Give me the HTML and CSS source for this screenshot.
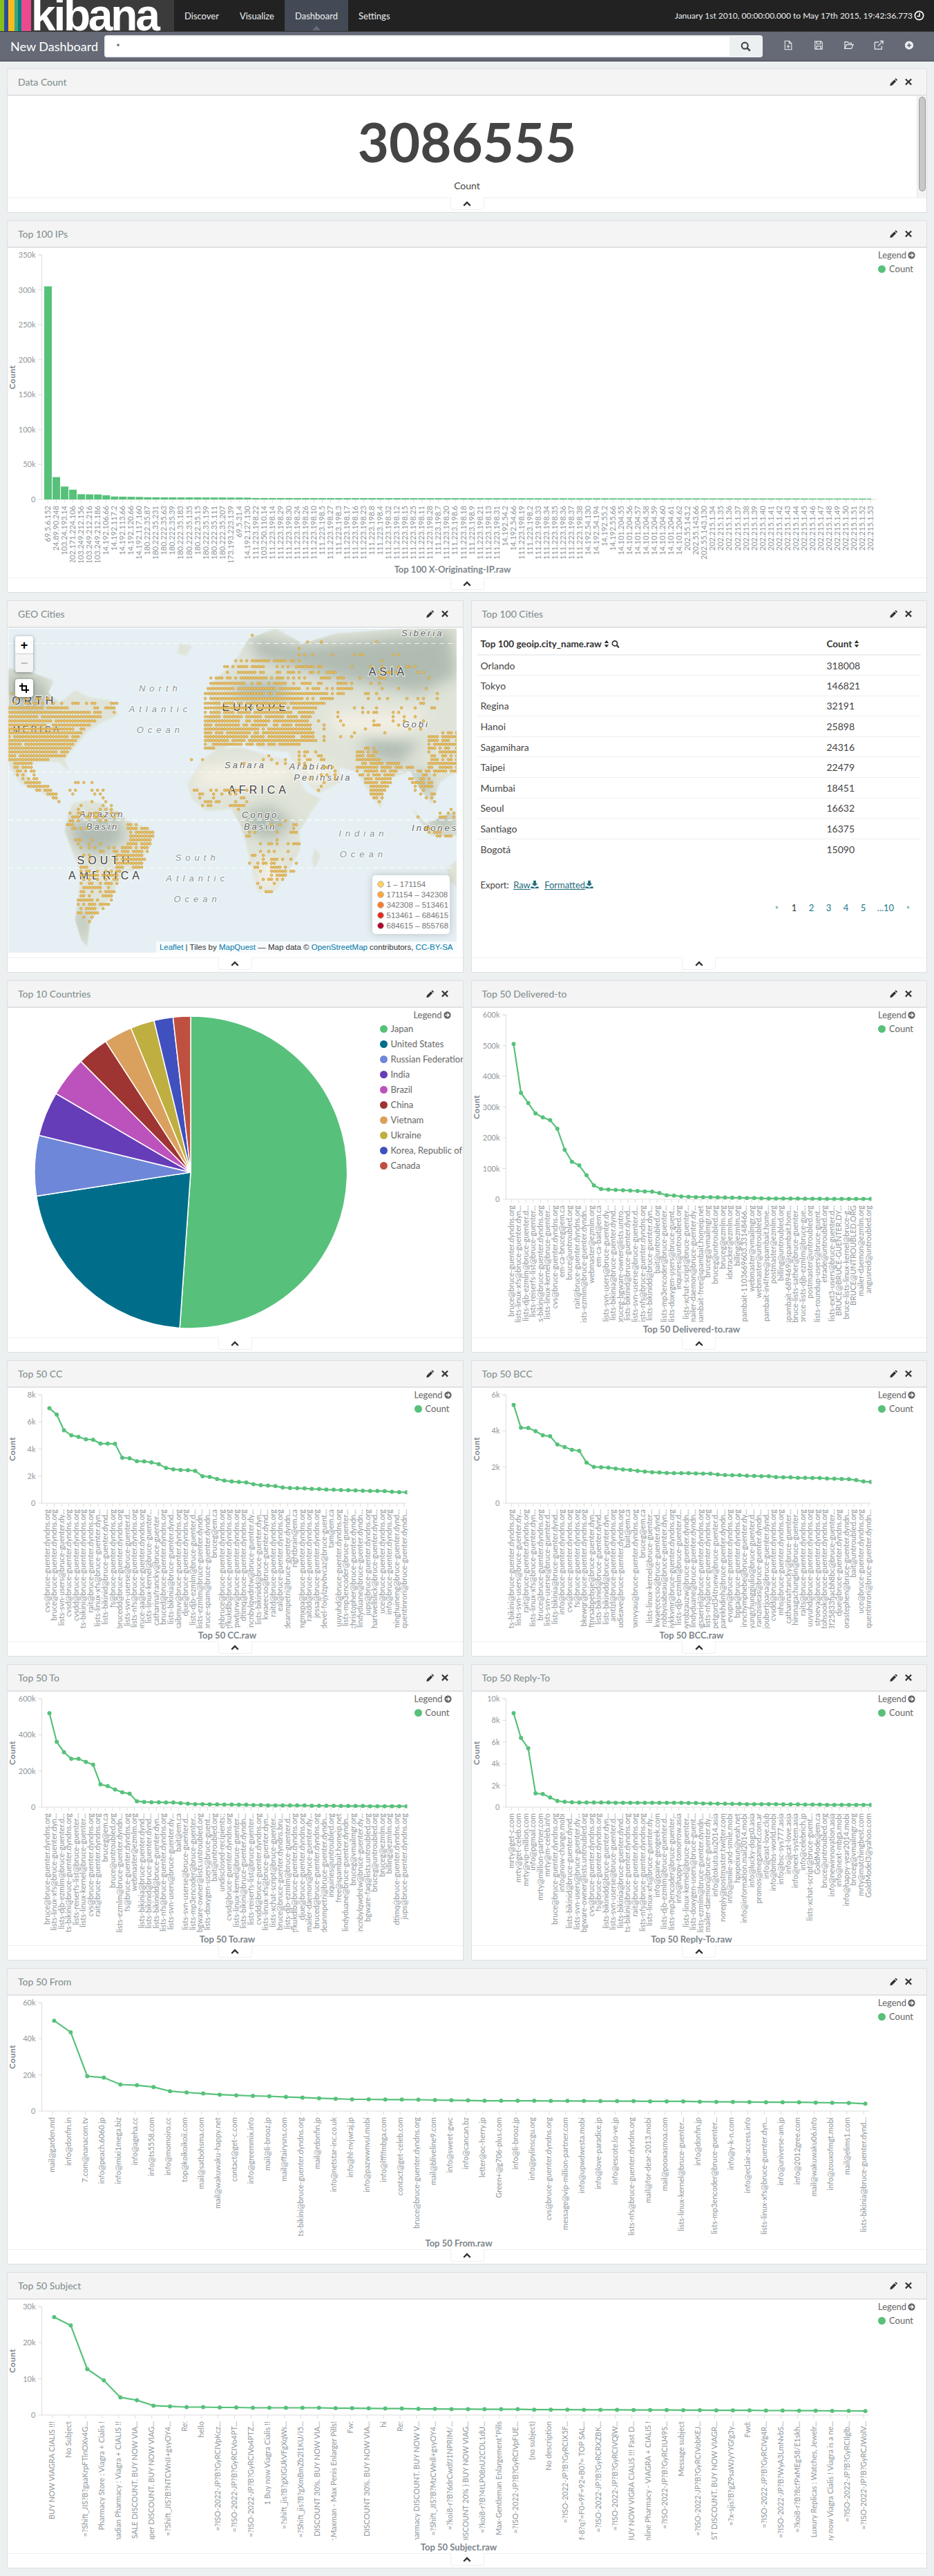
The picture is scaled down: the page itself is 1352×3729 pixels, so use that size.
FILE: index.html
```html
<!DOCTYPE html>
<html lang="en">
<head>
    <meta charset="UTF-8">
    <title>New Dashboard - Kibana</title>
    <link rel="stylesheet" href="styles.css">
</head>
<body>
    <svg class="defs" width="0" height="0">
        <symbol id="i-pencil" viewBox="0 0 16 16"><path d="M11.6 1l3.4 3.4-1.7 1.7-3.4-3.4zM8.9 3.7l3.4 3.4-7.6 7.6L.4 15.6l.9-4.3z"/></symbol>
        <symbol id="i-times" viewBox="0 0 16 16"><path d="M3.6 1.5L8 5.9l4.4-4.4 2.1 2.1L10.1 8l4.4 4.4-2.1 2.1L8 10.1l-4.4 4.4-2.1-2.1L5.9 8 1.5 3.6z"/></symbol>
        <symbol id="i-chevron" viewBox="0 0 16 16"><path d="M8 3l7.5 7.5-2.3 2.3L8 7.6l-5.2 5.2L.5 10.5z"/></symbol>
        <symbol id="i-search" viewBox="0 0 16 16"><circle cx="6.6" cy="6.6" r="4.8" fill="none" stroke="currentColor" stroke-width="2.3"/><path d="M10 10l4.6 4.6" stroke="currentColor" stroke-width="2.8"/></symbol>
        <symbol id="i-new" viewBox="0 0 16 16"><path d="M2.5.8h7l4 4v10.4h-11zM9.5.8v4h4M8 7v6M5 10h6" fill="none" stroke="currentColor" stroke-width="1.2"/></symbol>
        <symbol id="i-save" viewBox="0 0 16 16"><path d="M2 1.5h10l2 2v11H2zM5 1.5v4.500h6v-4.500M4.500 14.500v-5h7v5" fill="none" stroke="currentColor" stroke-width="1.3"/></symbol>
        <symbol id="i-open" viewBox="0 0 16 16"><path d="M1 13.500V2.500h4.500l1.500 2h5v2.500M1 13.500h11l3-6.500H4z" fill="none" stroke="currentColor" stroke-width="1.3"/></symbol>
        <symbol id="i-share" viewBox="0 0 16 16"><path d="M8 3H1.500v11.500H13V9M6.500 9.500L14.500 1.500M10 1h5v5" fill="none" stroke="currentColor" stroke-width="1.4"/></symbol>
        <symbol id="i-plus" viewBox="0 0 16 16"><path fill-rule="evenodd" d="M8 1a7 7 0 1 0 0 14A7 7 0 0 0 8 1zM7 4.500h2V7h2.500v2H9v2.500H7V9H4.500V7H7z"/></symbol>
        <symbol id="i-clock" viewBox="0 0 16 16"><circle cx="8" cy="8" r="6.600" fill="none" stroke="currentColor" stroke-width="1.800"/><path d="M8.700 4v5H4.800" fill="none" stroke="currentColor" stroke-width="1.600"/></symbol>
        <symbol id="i-arrow" viewBox="0 0 16 16"><path fill-rule="evenodd" d="M8 .5a7.500 7.500 0 1 0 0 15 7.500 7.500 0 0 0 0-15zM8.500 3.500L13 8l-4.500 4.500L7 11l2-2H3.500V7H9L7 5z"/></symbol>
        <symbol id="i-sort" viewBox="0 0 10 16"><path d="M5 1l4.500 5.500H.5zM5 15L.5 9.500h9z"/></symbol>
        <symbol id="i-down" viewBox="0 0 16 16"><path d="M5.500 1h5v5.500H14L8 12 2 6.500h3.500zM.5 12.500h4L8 15l3.500-2.500h4V16H.500z"/></symbol>
        <symbol id="i-crop" viewBox="0 0 16 16"><path d="M4.500 0v11.500H16M0 4.500h11.500V16" fill="none" stroke="currentColor" stroke-width="2.200"/></symbol>
    </svg>

    <nav class="topnav">
        <div class="logo">
            <i class="s1"></i><i class="s2"></i><i class="s3"></i><i class="s4"></i><i class="s5"></i>
            <span class="logo-text">kibana</span>
        </div>
        <a class="nav-item">Discover</a>
        <a class="nav-item">Visualize</a>
        <a class="nav-item active">Dashboard</a>
        <a class="nav-item">Settings</a>
        <div class="time">January 1st 2010, 00:00:00.000 to May 17th 2015, 19:42:36.773<svg class="clock"><use href="#i-clock"/></svg></div>
    </nav>

    <div class="subnav">
        <div class="dash-name">New Dashboard</div>
        <div class="search">
            <input type="text" value="*">
            <button><svg><use href="#i-search"/></svg></button>
        </div>
        <div class="tools">
            <svg><use href="#i-new"/></svg>
            <svg><use href="#i-save"/></svg>
            <svg><use href="#i-open"/></svg>
            <svg><use href="#i-share"/></svg>
            <svg><use href="#i-plus"/></svg>
        </div>
    </div>

    <div class="dash">
        <section class="panel wide h-small">
            <div class="panel-head"><h2>Data Count</h2><svg><use href="#i-pencil"/></svg><svg><use href="#i-times"/></svg></div>
            <div class="panel-body metric">
                <div class="metric-value">3086555</div>
                <div class="metric-label">Count</div>
                <div class="scroll"><div class="thumb"></div></div>
            </div>
            <div class="panel-foot"><span class="tab"><svg><use href="#i-chevron"/></svg></span></div>
        </section>

        <section class="panel wide h-big">
            <div class="panel-head"><h2>Top 100 IPs</h2><svg><use href="#i-pencil"/></svg><svg><use href="#i-times"/></svg></div>
            <div class="panel-body chart" id="ips"></div>
            <div class="panel-foot"><span class="tab"><svg><use href="#i-chevron"/></svg></span></div>
        </section>

        <section class="panel h-big">
            <div class="panel-head"><h2>GEO Cities</h2><svg><use href="#i-pencil"/></svg><svg><use href="#i-times"/></svg></div>
            <div class="panel-body geo">
                <div class="map">
                    <svg id="map" class="map-svg"></svg>
                    <div class="zoom-box">
                        <span>+</span>
                        <span class="off">&minus;</span>
                    </div>
                    <div class="zoom-box crop"><svg><use href="#i-crop"/></svg></div>
                    <div class="map-legend">
                        <div><i class="c1"></i>1 &ndash; 171154</div>
                        <div><i class="c2"></i>171154 &ndash; 342308</div>
                        <div><i class="c3"></i>342308 &ndash; 513461</div>
                        <div><i class="c4"></i>513461 &ndash; 684615</div>
                        <div><i class="c5"></i>684615 &ndash; 855768</div>
                    </div>
                    <div class="attrib"><a>Leaflet</a> | Tiles by <a>MapQuest</a> &mdash; Map data &copy; <a>OpenStreetMap</a> contributors, <a>CC-BY-SA</a></div>
                </div>
            </div>
            <div class="panel-foot"><span class="tab"><svg><use href="#i-chevron"/></svg></span></div>
        </section>

        <section class="panel h-big">
            <div class="panel-head"><h2>Top 100 Cities</h2><svg><use href="#i-pencil"/></svg><svg><use href="#i-times"/></svg></div>
            <div class="panel-body cities">
                <table>
                    <thead>
                        <tr>
                            <th>Top 100 geoip.city_name.raw <svg class="sort"><use href="#i-sort"/></svg> <svg class="find"><use href="#i-search"/></svg></th>
                            <th>Count <svg class="sort"><use href="#i-sort"/></svg></th>
                        </tr>
                    </thead>
                    <tbody>
                        <tr><td>Orlando</td><td>318008</td></tr>
                        <tr><td>Tokyo</td><td>146821</td></tr>
                        <tr><td>Regina</td><td>32191</td></tr>
                        <tr><td>Hanoi</td><td>25898</td></tr>
                        <tr><td>Sagamihara</td><td>24316</td></tr>
                        <tr><td>Taipei</td><td>22479</td></tr>
                        <tr><td>Mumbai</td><td>18451</td></tr>
                        <tr><td>Seoul</td><td>16632</td></tr>
                        <tr><td>Santiago</td><td>16375</td></tr>
                        <tr><td>Bogotá</td><td>15090</td></tr>
                    </tbody>
                </table>
                <div class="export">Export: <a>Raw</a><svg><use href="#i-down"/></svg> <a class="second">Formatted</a><svg><use href="#i-down"/></svg></div>
                <div class="pages">
                    <a class="small">«</a><span>1</span><a>2</a><a>3</a><a>4</a><a>5</a><a class="more">...10</a><a class="small">»</a>
                </div>
            </div>
            <div class="panel-foot"><span class="tab"><svg><use href="#i-chevron"/></svg></span></div>
        </section>

        <section class="panel h-big">
            <div class="panel-head"><h2>Top 10 Countries</h2><svg><use href="#i-pencil"/></svg><svg><use href="#i-times"/></svg></div>
            <div class="panel-body chart" id="countries"></div>
            <div class="panel-foot"><span class="tab"><svg><use href="#i-chevron"/></svg></span></div>
        </section>

        <section class="panel h-big">
            <div class="panel-head"><h2>Top 50 Delivered-to</h2><svg><use href="#i-pencil"/></svg><svg><use href="#i-times"/></svg></div>
            <div class="panel-body chart" id="delivered"></div>
            <div class="panel-foot"><span class="tab"><svg><use href="#i-chevron"/></svg></span></div>
        </section>

        <section class="panel h-mid">
            <div class="panel-head"><h2>Top 50 CC</h2><svg><use href="#i-pencil"/></svg><svg><use href="#i-times"/></svg></div>
            <div class="panel-body chart" id="cc"></div>
            <div class="panel-foot"><span class="tab"><svg><use href="#i-chevron"/></svg></span></div>
        </section>

        <section class="panel h-mid">
            <div class="panel-head"><h2>Top 50 BCC</h2><svg><use href="#i-pencil"/></svg><svg><use href="#i-times"/></svg></div>
            <div class="panel-body chart" id="bcc"></div>
            <div class="panel-foot"><span class="tab"><svg><use href="#i-chevron"/></svg></span></div>
        </section>

        <section class="panel h-mid">
            <div class="panel-head"><h2>Top 50 To</h2><svg><use href="#i-pencil"/></svg><svg><use href="#i-times"/></svg></div>
            <div class="panel-body chart" id="to"></div>
            <div class="panel-foot"><span class="tab"><svg><use href="#i-chevron"/></svg></span></div>
        </section>

        <section class="panel h-mid">
            <div class="panel-head"><h2>Top 50 Reply-To</h2><svg><use href="#i-pencil"/></svg><svg><use href="#i-times"/></svg></div>
            <div class="panel-body chart" id="replyto"></div>
            <div class="panel-foot"><span class="tab"><svg><use href="#i-chevron"/></svg></span></div>
        </section>

        <section class="panel wide h-mid">
            <div class="panel-head"><h2>Top 50 From</h2><svg><use href="#i-pencil"/></svg><svg><use href="#i-times"/></svg></div>
            <div class="panel-body chart" id="from"></div>
            <div class="panel-foot"><span class="tab"><svg><use href="#i-chevron"/></svg></span></div>
        </section>

        <section class="panel wide h-mid">
            <div class="panel-head"><h2>Top 50 Subject</h2><svg><use href="#i-pencil"/></svg><svg><use href="#i-times"/></svg></div>
            <div class="panel-body chart" id="subject"></div>
            <div class="panel-foot"><span class="tab"><svg><use href="#i-chevron"/></svg></span></div>
        </section>
    </div>

    <script src="charts.js"></script>
</body>
</html>
```
FILE: styles.css
```css
* {
    box-sizing: border-box;
}
body {
    margin: 0;
    background: #ecf0f1;
    font-family: Lato, "Liberation Sans", sans-serif;
    font-size: 13px;
    color: #444;
    height: 3729px;
    overflow: hidden;
}
.defs {
    position: absolute;
}
svg {
    fill: currentColor;
}

/* top bar */
.topnav {
    display: flex;
    height: 46px;
    background: #222;
    border-bottom: 1px solid #333;
    color: #ecf0f1;
}
.logo {
    display: flex;
    width: 252px;
    height: 45px;
    overflow: hidden;
    background: #3b3b3b;
}
.logo i {
    display: block;
    height: 45px;
}
.s1 { width: 6px; background: #85c01e; }
.s2 { width: 6px; background: #2f4a9b; }
.s3 { width: 9px; background: #f5bc1c; }
.s4 { width: 10px; background: linear-gradient(90deg, #3aa585 50%, #00807c 50%); }
.s5 { width: 14px; background: #ec4a90; }
.logo-text {
    font-family: "Liberation Sans", sans-serif;
    font-weight: bold;
    font-size: 64px;
    line-height: 45px;
    letter-spacing: -3.200px;
    color: #fff;
}
.nav-item {
    position: relative;
    padding: 0 15px;
    line-height: 46px;
    font-size: 13px;
}
.nav-item.active {
    background: #444a55;
}
.nav-item.active:after {
    content: "";
    position: absolute;
    left: 50%;
    bottom: 1px;
    margin-left: -6px;
    border: 6px solid transparent;
    border-top: 0;
    border-bottom: 7px solid #656a76;
}
.time {
    margin-left: auto;
    padding-right: 14px;
    line-height: 46px;
    font-size: 12px;
    display: flex;
    align-items: center;
}
.clock {
    width: 15px;
    height: 15px;
    margin-left: 2px;
    color: #fff;
}

/* search bar */
.subnav {
    display: flex;
    align-items: center;
    height: 43px;
    background: #656a76;
    border-bottom: 1px solid #3f434c;
}
.dash-name {
    width: 151px;
    padding-left: 15px;
    font-size: 18px;
    color: #fff;
}
.search {
    display: flex;
    width: 953px;
    height: 32px;
    border: 2px solid #ecf0f1;
    border-radius: 4px;
    background: #ecf0f1;
}
.search input {
    flex: 1;
    border: 0;
    padding: 0 15px;
    font: 14px Lato, sans-serif;
    color: #444;
    background: #fff;
    outline: 0;
}
.search button {
    width: 46px;
    border: 0;
    padding: 0;
    background: none;
    color: #444;
}
.search button svg {
    width: 15px;
    height: 15px;
    margin-top: 4px;
}
.tools {
    flex: 1;
    display: flex;
    justify-content: space-between;
    padding: 0 29px 3px 30px;
    color: #ecf0f1;
}
.tools svg {
    width: 14px;
    height: 15px;
}

/* panels */
.dash {
    display: grid;
    grid-template-columns: 1fr 1fr;
    gap: 11px;
    margin: 10px 10px 0;
}
.panel {
    display: flex;
    flex-direction: column;
    background: #fff;
    border: 1px solid #dcdfe0;
}
.wide { grid-column: span 2; }
.h-small { height: 209px; }
.h-big { height: 539px; }
.h-mid { height: 429px; }
.panel-head {
    display: flex;
    align-items: center;
    flex: none;
    height: 39px;
    padding: 0 20px 0 15px;
    background: #f4f4f4;
    border-bottom: 2px solid #dfe2e3;
    color: #333;
}
.panel-head h2 {
    flex: 1;
    margin: 0;
    font-size: 14px;
    font-weight: normal;
    color: #7b8a8b;
}
.panel-head svg {
    width: 12px;
    height: 13px;
    margin-left: 9px;
}
.panel-body {
    flex: 1;
    min-height: 0;
    position: relative;
    overflow: hidden;
}
.panel-foot {
    flex: none;
    height: 21px;
    border-top: 1px solid #eeeff0;
    display: flex;
    justify-content: center;
}
.tab {
    display: block;
    width: 49px;
    height: 18px;
    margin-top: -1px;
    background: #fff;
    border: 1px solid #eeeff0;
    border-top: 0;
    border-radius: 0 0 4px 4px;
    text-align: center;
    color: #333;
}
.tab svg {
    width: 12px;
    height: 12px;
    margin-top: 3px;
}

/* data count */
.metric {
    text-align: center;
}
.metric-value {
    margin-top: 22px;
    font-size: 78px;
    line-height: 88px;
    font-weight: bold;
    color: #444;
}
.metric-label {
    margin-top: 11px;
    font-size: 14px;
}
.scroll {
    position: absolute;
    top: 0;
    right: 0;
    bottom: 0;
    width: 14px;
    background: #f4f4f4;
    border-left: 1px solid #e8e8e8;
    padding: 1px 1px 9px 2px;
}
.thumb {
    height: 100%;
    background: #c8c8c8;
    border: 1px solid #999;
    border-radius: 5px;
}

/* charts */
.chart {
    display: flex;
}
.chart-svg {
    flex: 1;
    min-width: 0;
    height: 100%;
}
.legend {
    flex: none;
    width: 70px;
    padding-top: 1px;
    font-size: 13px;
    color: #666;
}
.legend.pie-legend {
    width: 120px;
}
.legend-title {
    height: 18px;
    padding-right: 17px;
    text-align: right;
    line-height: 18px;
    white-space: nowrap;
}
.legend-title svg {
    width: 11px;
    height: 11px;
    margin-left: 2px;
    vertical-align: -1px;
}
.legend-item {
    display: flex;
    align-items: center;
    height: 22px;
    line-height: 22px;
    white-space: nowrap;
}
.legend-item i {
    flex: none;
    width: 11px;
    height: 11px;
    margin-right: 5px;
    border-radius: 50%;
}
.tick {
    font-size: 11px;
    fill: #8f979c;
}
.axis-label {
    font-size: 11px;
    fill: #8f979c;
}
.axis-name {
    font-size: 13px;
    font-weight: bold;
    fill: #7d868c;
}
.y-name {
    font-size: 12px;
    letter-spacing: .5px;
}
.axis-line {
    stroke: #ddd;
    fill: none;
}
.bar {
    fill: #57c17b;
}
.trend {
    fill: none;
    stroke: #57c17b;
    stroke-width: 2.2;
}
.dot {
    fill: #57c17b;
}

/* map */
.geo {
    padding: 1px 9px 7px 1px;
}
.map {
    position: relative;
    height: 100%;
    background: #e6f0f4;
    overflow: hidden;
}
.map-svg {
    display: block;
    width: 100%;
    height: 100%;
}
.zoom-box {
    position: absolute;
    top: 11px;
    left: 10px;
    width: 26px;
    background: #fff;
    border-radius: 4px;
    box-shadow: 0 1px 5px rgba(0, 0, 0, .4);
    font: bold 18px "Liberation Sans", sans-serif;
    color: #000;
}
.zoom-box span {
    display: block;
    height: 26px;
    line-height: 26px;
    text-align: center;
    border-bottom: 1px solid #ccc;
}
.zoom-box .off {
    border: 0;
    color: #bbb;
    background: #f4f4f4;
    border-radius: 0 0 4px 4px;
}
.crop {
    top: 73px;
    height: 26px;
    padding: 6px;
}
.crop svg {
    display: block;
    width: 14px;
    height: 14px;
}
.map-legend {
    position: absolute;
    right: 10px;
    bottom: 27px;
    width: 112px;
    height: 85px;
    padding: 5px 7px;
    background: #fff;
    border-radius: 5px;
    box-shadow: 0 0 12px rgba(0, 0, 0, .2);
    font: 11.500px "Liberation Sans", sans-serif;
    color: #777;
}
.map-legend div {
    display: flex;
    align-items: center;
    height: 15px;
    white-space: nowrap;
}
.map-legend i {
    flex: none;
    width: 10px;
    height: 10px;
    margin-right: 4px;
    border-radius: 50%;
    border: 1px solid #bbb;
}
.c1 { background: #fdd05e; }
.c2 { background: #fda63a; }
.c3 { background: #fb7a2c; }
.c4 { background: #e82a1e; }
.c5 { background: #b10026; }
.attrib {
    position: absolute;
    right: 0;
    bottom: 0;
    height: 16px;
    padding: 0 5px;
    background: rgba(255, 255, 255, .7);
    font: 11.500px/16px "Liberation Sans", sans-serif;
    color: #333;
    white-space: nowrap;
}
.attrib a {
    color: #0078a8;
}
.land-text {
    font: 12px "Liberation Sans", sans-serif;
    letter-spacing: 4px;
    text-anchor: middle;
    fill: #555;
    stroke: #fff;
    stroke-width: 2.500px;
    stroke-opacity: .7;
    paint-order: stroke;
}
.land-text.big {
    font-size: 16px;
    letter-spacing: 5px;
    fill: #444;
}
.land-text.sea {
    font-style: italic;
    font-size: 13px;
    letter-spacing: 6px;
    fill: #8b9599;
}
.land-text.place {
    font-style: italic;
    font-size: 13px;
    letter-spacing: 3px;
    fill: #666;
}
.city {
    fill: #edc36a;
    stroke: #c99a35;
    stroke-width: .8;
}

/* city table */
.cities {
    padding: 0 8px;
    font-size: 14px;
}
table {
    width: 100%;
    table-layout: fixed;
    border-collapse: collapse;
}
th {
    height: 39px;
    padding: 8px 5px 0;
    text-align: left;
    font-size: 13.500px;
    color: #333;
    border-bottom: 2px solid #ecf0f1;
    white-space: nowrap;
}
th:first-child {
    width: 501px;
}
td {
    height: 29.600px;
    padding: 0 5px;
    border-bottom: 1px solid #ecf0f1;
}
tr:last-child td {
    border-bottom: 0;
}
.sort {
    width: 8px;
    height: 12px;
    vertical-align: -1px;
}
.find {
    width: 12px;
    height: 13px;
    vertical-align: -2px;
}
.export {
    margin: 28px 0 0 5px;
    font-size: 13px;
    line-height: 18px;
}
.export a {
    margin-left: 3px;
    color: #1f6b7a;
    text-decoration: underline;
}
.export a.second {
    margin-left: 5px;
}
.export svg {
    width: 12px;
    height: 12px;
    color: #1f6b7a;
}
.pages {
    display: flex;
    justify-content: flex-end;
    margin-top: 16px;
    padding-right: 6px;
    font-size: 13px;
}
.pages a, .pages span {
    width: 25px;
    text-align: center;
    color: #1f7a8c;
}
.pages span {
    color: #333;
}
.pages .more {
    width: 40px;
}
.pages .small {
    font-size: 10px;
}
```
FILE: charts.js
```js
// chart data read off the dashboard
var GREEN = "#57c17b";

function el(id) { return document.getElementById(id); }

function legendHtml(items, cls) {
    var h = '<div class="legend ' + (cls || "") + '"><div class="legend-title">Legend<svg><use href="#i-arrow"/></svg></div>';
    items.forEach(function (it) {
        h += '<div class="legend-item"><i style="background:' + it[1] + '"></i>' + it[0] + "</div>";
    });
    return h + "</div>";
}

function tickLabel(v) {
    return v >= 1000 ? v / 1000 + "k" : "" + v;
}

// o: max, ticks, zero (y of 0), top, labels, values, bars or line, first/last, labelsEnd, title, titleX
function drawChart(id, o) {
    var scale = (o.zero - o.top) / o.max;
    var axisX = 49.5;
    var s = "";
    var step = (o.last - o.first) / (o.values.length - 1);
    var tickStart = o.first + (o.tickOff || 0);

    s += '<path class="axis-line" d="M' + (axisX - 5) + " " + o.top + "H" + axisX + "V" + o.zero + "H" + o.axisEnd + '"/>';
    o.ticks.forEach(function (t) {
        var y = o.zero - t * scale;
        s += '<path class="axis-line" d="M' + (axisX - 5) + " " + y + "H" + axisX + '"/>';
        s += '<text class="tick" text-anchor="end" x="' + (axisX - 9) + '" y="' + (y + 4) + '">' + tickLabel(t) + "</text>";
    });

    s += '<clipPath id="lab-' + id + '"><rect x="0" y="' + o.zero + '" width="1400" height="' + (o.labelsEnd - o.zero) + '"/></clipPath>';
    s += '<clipPath id="area-' + id + '"><rect x="' + axisX + '" y="0" width="' + (o.clipX - axisX) + '" height="' + (o.zero + 4) + '"/></clipPath>';

    var labels = "";
    o.labels.forEach(function (t, i) {
        var x = tickStart + i * step;
        s += '<path class="axis-line" d="M' + x + " " + o.zero + "v5" + '"/>';
        labels += '<text class="axis-label" text-anchor="end" transform="translate(' + (x + 3.500) + "," + (o.zero + 9) + ') rotate(-90)">' + t + "</text>";
    });
    s += '<g clip-path="url(#lab-' + id + ')">' + labels + "</g>";

    var plot = "";
    if (o.bars) {
        o.values.forEach(function (v, i) {
            var h = v * scale;
            plot += '<rect class="bar" x="' + (o.first + i * step - 5.500) + '" y="' + (o.zero - h) + '" width="11" height="' + h + '"/>';
        });
    } else {
        var pts = o.values.map(function (v, i) {
            return (o.first + i * step).toFixed(1) + "," + (o.zero - v * scale).toFixed(1);
        });
        plot += '<polyline class="trend" points="' + pts.join(" ") + '"/>';
        pts.forEach(function (p) {
            var c = p.split(",");
            plot += '<circle class="dot" cx="' + c[0] + '" cy="' + c[1] + '" r="3"/>';
        });
    }
    s += '<g clip-path="url(#area-' + id + ')">' + plot + "</g>";

    var midY = (o.top + o.zero) / 2;
    s += '<text class="axis-name y-name" text-anchor="middle" transform="translate(11,' + midY + ') rotate(-90)">Count</text>';
    s += '<text class="axis-name" text-anchor="middle" x="' + o.titleX + '" y="' + (o.labelsEnd + 15) + '">' + o.title + "</text>";

    el(id).innerHTML = '<svg class="chart-svg">' + s + "</svg>" + legendHtml([["Count", GREEN]]);
}

function drawPie() {
    var slices = [
        ["Japan", "#57c17b", 184], ["United States", "#006e8a", 261.2], ["Russian Federation", "#6f87d8", 283.7],
        ["India", "#663db8", 300.3], ["Brazil", "#bc52bc", 315.3], ["China", "#9e3533", 327],
        ["Vietnam", "#daa05d", 337.5], ["Ukraine", "#bfaf40", 346.4], ["Korea, Republic of", "#4050bf", 353.5],
        ["Canada", "#bf5040", 360]
    ];
    var cx = 265, cy = 238, r = 226, from = 0, s = "";
    slices.forEach(function (p) {
        var a0 = from * Math.PI / 180, a1 = p[2] * Math.PI / 180;
        var large = p[2] - from > 180 ? 1 : 0;
        s += '<path fill="' + p[1] + '" stroke="#fff" stroke-width="1.500" d="M' + cx + " " + cy +
            "L" + (cx + r * Math.sin(a0)).toFixed(1) + " " + (cy - r * Math.cos(a0)).toFixed(1) +
            "A" + r + " " + r + " 0 " + large + " 1 " + (cx + r * Math.sin(a1)).toFixed(1) + " " + (cy - r * Math.cos(a1)).toFixed(1) + 'Z"/>';
        from = p[2];
    });
    el("countries").innerHTML = '<svg class="chart-svg">' + s + "</svg>" +
        legendHtml(slices.map(function (p) { return [p[0], p[1]]; }), "pie-legend");
}

/* ---- map ---- polygons are in a 1498x1313 sketch grid, offset 27,140 */
function mx(x) { return (x - 27) / 2.306; }
function my(y) { return (y - 140) / 2.8; }

function polyPath(pts) {
    return "M" + pts.map(function (p) { return mx(p[0]).toFixed(1) + " " + my(p[1]).toFixed(1); }).join("L") + "Z";
}

function inPoly(x, y, pts) {
    var c = false;
    for (var i = 0, j = pts.length - 1; i < pts.length; j = i++) {
        if ((pts[i][1] > y) != (pts[j][1] > y) &&
            x < (pts[j][0] - pts[i][0]) * (y - pts[i][1]) / (pts[j][1] - pts[i][1]) + pts[i][0]) c = !c;
    }
    return c;
}

var LAND = [
    [[27,300],[110,320],[180,350],[160,400],[200,440],[250,390],[300,420],[370,430],[395,490],[340,520],[290,560],[250,620],[215,670],[230,720],[195,680],[130,680],[80,690],[90,740],[140,780],[175,800],[205,850],[180,830],[130,800],[70,770],[40,720],[27,680]],
    [[240,850],[290,835],[340,850],[400,890],[430,920],[515,960],[500,1020],[480,1060],[470,1110],[420,1130],[390,1170],[370,1230],[330,1280],[300,1330],[290,1430],[270,1400],[250,1320],[260,1230],[270,1140],[240,1040],[215,960],[225,900]],
    [[670,680],[720,630],[800,620],[880,650],[950,670],[985,720],[1020,800],[1070,830],[1040,880],[1000,960],[1000,1040],[960,1130],[920,1200],[860,1210],[835,1090],[820,1010],[800,930],[770,870],[690,880],[640,830],[625,770]],
    [[690,620],[680,520],[720,460],[690,400],[720,340],[780,280],[830,180],[920,140],[1010,200],[1120,160],[1340,140],[1525,140],[1525,720],[1470,760],[1440,850],[1400,790],[1370,720],[1290,750],[1270,870],[1230,800],[1190,720],[1130,700],[1140,760],[1060,810],[1000,730],[960,640],[880,630],[820,600],[780,600],[740,630],[690,630]],
    [[1370,860],[1420,930],[1520,880],[1525,980],[1440,980],[1400,920]],
    [[1490,1110],[1525,1080],[1525,1190],[1500,1160]],
    [[1050,1030],[1070,1060],[1050,1110],[1040,1080]],
    [[600,200],[640,210],[620,250],[590,240]]
];
var DARK = [
    [[27,320],[130,340],[170,420],[130,470],[27,450]],
    [[830,170],[1000,210],[1500,150],[1525,330],[1400,400],[1150,350],[1000,300],[860,260]],
    [[225,930],[390,900],[420,990],[330,1060],[250,1020]],
    [[810,890],[900,860],[980,930],[900,1000],[830,960]],
    [[1370,700],[1440,760],[1430,830],[1390,780]],
    [[790,360],[950,350],[950,440],[780,420]],
    [[1420,900],[1520,900],[1520,960],[1440,950]],
    [[250,1290],[290,1290],[285,1420],[265,1400]],
    [[1200,580],[1400,600],[1330,690],[1240,660]]
];
var PALE = [
    [[670,690],[950,680],[990,760],[800,790],[640,790]],
    [[990,640],[1130,710],[1060,790],[1000,720]],
    [[1080,480],[1440,470],[1360,560],[1130,570]],
    [[390,140],[520,140],[500,200],[470,250],[445,310],[420,290],[400,220]],
    [[860,1080],[950,1090],[920,1190],[860,1200]]
];
// where the cities sit: polygon + how full the grid gets
var CITIES = [
    [[[30,455],[200,455],[345,490],[300,530],[250,600],[215,660],[120,680],[30,680]], .95],
    [[[27,400],[210,430],[390,440],[395,495],[30,480]], .3],
    [[[40,680],[110,680],[130,760],[180,790],[210,860],[170,820],[70,770]], .75],
    [[[680,400],[1180,380],[1050,470],[1030,510],[1060,600],[960,620],[680,625]], .9],
    [[[770,270],[980,250],[1170,340],[1180,385],[690,400],[700,340]], .72],
    [[[830,165],[1260,190],[1500,370],[1480,430],[1180,440],[1000,250]], .14],
    [[[1050,470],[1500,430],[1400,560],[1200,580],[1060,600]], .12],
    [[[1430,570],[1525,550],[1525,720],[1420,740]], .72],
    [[[1190,650],[1350,690],[1310,740],[1270,870],[1215,770],[1190,720]], .85],
    [[[1350,690],[1440,730],[1460,850],[1380,800]], .6],
    [[[1190,610],[1260,610],[1260,690],[1190,690]], .65],
    [[[1360,850],[1420,940],[1525,990],[1440,985],[1390,900]], .55],
    [[[1430,860],[1525,860],[1525,910],[1450,910]], .25],
    [[[980,620],[1090,620],[1130,740],[1060,800],[1000,730]], .25],
    [[[630,670],[950,650],[960,690],[680,700]], .15],
    [[[625,780],[830,790],[830,880],[680,880]], .35],
    [[[820,960],[1000,900],[1000,1080],[960,1180],[860,1210],[830,1090]], .18],
    [[[905,1100],[960,1100],[950,1170],[900,1160]], .85],
    [[[855,1195],[915,1195],[915,1218],[855,1218]], .7],
    [[[420,920],[520,960],[490,1060],[470,1115],[385,1125],[380,1050],[430,1000]], .85],
    [[[215,910],[245,850],[340,830],[400,880],[380,920],[230,970]], .3],
    [[[240,970],[420,1040],[300,1080],[270,1060]], .3],
    [[[270,1100],[410,1130],[370,1250],[300,1330],[255,1290]], .65],
    [[[265,1320],[300,1320],[295,1440],[265,1390]], .12],
    [[[210,760],[345,765],[350,835],[250,835]], .25]
];

function drawMap() {
    var s = "";
    s += '<filter id="soft" x="-30%" y="-30%" width="160%" height="160%"><feGaussianBlur stdDeviation="10"/></filter>';
    s += '<filter id="softer"><feGaussianBlur stdDeviation="1.500"/></filter>';
    s += '<clipPath id="landclip"><path d="' + LAND.map(polyPath).join("") + '"/></clipPath>';
    s += '<g filter="url(#softer)" fill="#dfe3d8">' + LAND.map(function (p) { return '<path d="' + polyPath(p) + '"/>'; }).join("") + "</g>";
    s += '<g clip-path="url(#landclip)">';
    s += '<g filter="url(#soft)" fill="#a9b5ab" opacity=".85">' + DARK.map(function (p) { return '<path d="' + polyPath(p) + '"/>'; }).join("") + "</g>";
    s += '<g filter="url(#soft)" fill="#f3efe4">' + PALE.map(function (p) { return '<path d="' + polyPath(p) + '"/>'; }).join("") + "</g>";
    s += "</g>";
    [200, 722, 916, 1110].forEach(function (y) {
        s += '<path d="M0 ' + my(y) + 'H650" stroke="#fff" stroke-width="' + (y == 916 ? 1.500 : 1) + '" stroke-dasharray="7 5" opacity=".8"/>';
    });

    var texts = [
        ["big", "ASIA", 1295, 315], ["big", "EUROPE", 853, 458], ["big", "AFRICA", 863, 795], ["big", "NORTH", 95, 435],
        ["", "AMERICA", 110, 545], ["big", "SOUTH", 350, 1080], ["big", "AMERICA", 352, 1143],
        ["place", "Sahara", 818, 692], ["place", "Arabian", 1040, 696], ["place", "Peninsula", 1077, 742],
        ["place", "Gobi", 1388, 527], ["place", "Siberia", 1410, 156], ["place", "Amazon", 340, 889], ["place", "Basin", 342, 940],
        ["place", "Congo", 868, 892], ["place", "Basin", 868, 942], ["place", "Indonesia", 1470, 945],
        ["sea", "North", 534, 382], ["sea", "Atlantic", 534, 466], ["sea", "Ocean", 534, 550],
        ["sea", "South", 658, 1067], ["sea", "Atlantic", 658, 1151], ["sea", "Ocean", 658, 1235],
        ["sea", "Indian", 1212, 968], ["sea", "Ocean", 1212, 1052]
    ];
    texts.forEach(function (t) {
        s += '<text class="land-text ' + t[0] + '" x="' + mx(t[2]) + '" y="' + (my(t[3]) + 5) + '">' + t[1] + "</text>";
    });

    // grid of city markers, spacing follows the map projection
    var y = 167, seed = 7;
    function rnd() {
        seed = (seed * 16807) % 2147483647;
        return seed / 2147483647;
    }
    var dots = "";
    while (y < 1440) {
        for (var x = 30; x < 1525; x += 9.220) {
            var chance = 0;
            for (var i = 0; i < CITIES.length; i++) {
                if (inPoly(x, y, CITIES[i][0])) chance = Math.max(chance, CITIES[i][1]);
            }
            if (chance && rnd() < chance) {
                dots += '<circle class="city" cx="' + mx(x).toFixed(1) + '" cy="' + my(y).toFixed(1) + '" r="1.800"/>';
            }
        }
        y += y < 540 ? 27 - (y - 167) * .03 : y < 1000 ? 15.500 : 15.500 + (y - 1000) * .007;
    }
    s += dots;
    el("map").innerHTML = s;
}

/* ---- data ---- */
var ipLabels = ["69.5.6.152","24.89.90.248","103.24.193.14","202.171.224.106","103.249.212.156","103.249.212.216","103.249.212.186","14.192.106.66","14.192.117.2","14.192.113.66","14.192.120.66","14.192.117.160","180.222.35.87","180.222.35.231","180.222.35.63","180.222.35.39","180.222.35.183","180.222.35.135","180.222.35.15","180.222.35.159","180.222.35.111","180.222.35.207","173.193.223.139","69.5.31.4","14.192.127.130","111.223.198.22","103.250.110.14","111.223.198.14","111.223.198.29","111.223.198.30","111.223.198.24","111.223.198.26","111.223.198.10","111.223.198.5","111.223.198.27","111.223.198.3","111.223.198.17","111.223.198.16","111.223.198.23","111.223.198.8","111.223.198.4","111.223.198.32","111.223.198.12","111.223.198.15","111.223.198.25","111.223.198.11","111.223.198.28","111.223.198.7","111.223.198.20","111.223.198.6","111.223.198.18","111.223.198.9","111.223.198.21","111.223.198.13","111.223.198.31","14.192.54.2","14.192.54.66","111.223.198.19","111.223.198.2","111.223.198.33","111.223.198.34","111.223.198.35","111.223.198.36","111.223.198.37","111.223.198.38","14.192.54.130","14.192.54.194","14.192.55.2","14.192.55.66","14.101.204.55","14.101.204.56","14.101.204.57","14.101.204.58","14.101.204.59","14.101.204.60","14.101.204.61","14.101.204.62","202.55.143.2","202.55.143.66","202.55.143.130","202.215.1.34","202.215.1.35","202.215.1.36","202.215.1.37","202.215.1.38","202.215.1.39","202.215.1.40","202.215.1.41","202.215.1.42","202.215.1.43","202.215.1.44","202.215.1.45","202.215.1.46","202.215.1.47","202.215.1.48","202.215.1.49","202.215.1.50","202.215.1.51","202.215.1.52","202.215.1.53"];
var ipValues = [305000,32000,18500,14000,7500,7300,7200,6000,4200,4000,3800,3600,3200,3100,3000,3000,2900,2900,2900,2800,2800,2800,2700,2700,2600];
while (ipValues.length < 100) ipValues.push(Math.max(1200, 2300 - ipValues.length * 10));

var deliveredLabels = ["bruce@bruce-guenter.dyndns.org","lists-linux-xfs@bruce-guenter.dyn...","lists-djb-ezmlm@bruce-guenter.d...","lists-reiserfs-list@bruce-guenter...","lists-bikini@bruce-guenter.dyndns.org","lists-linux-kernel@bruce-guenter...","cvs@bruce-guenter.dyndns.org","em-ca-bruceg@em.ca","bruce@untroubled.org","rait@bruce-guenter.dyndns.org","lists-ezmlm@bruce-guenter.dyndn...","webmaster@ezmlm.org","em-ca-bait@em.ca","lists-svn-users@bruce-guenter.dy...","lists-bikinia@bruce-guenter.dynd...","bruceg-bgware-owner@lists.untro...","lists-bikinid@bruce-guenter.dynd...","lists-svn-userse@bruce-guenter.d...","lists-nfs@bruce-guenter.dyndns.org","lists-bikinidd@bruce-guenter.dyn...","bait@untroubled.org","lists-mp3encoder@bruce-guenter...","lists-doxygen-users@bruce-guent...","inquiries@untroubled.org","lists-xchat-script@bruce-guenter...","mailer-daemon@bruce-guenter.dy...","spambait-free@spambait.homeip.net","bruceg@vmailmgr.org","bruceg@untroubled.org","bruceg@ezmlm.org","idxtracker@ezmlm.org","billing@ezmlm.org","spambait-1103669603.33148466...","webmaster@vmailmgr.org","webmaster@untroubled.org","spambait-in4free@spambait.home...","postmaster@ezmlm.org","billing@untroubled.org","spambait-689469@spambait.hom...","bruce-lists-sather@bruce-guenter...","bruce-lists-djb-ezmlm@bruce-gue...","postmaster@untroubled.org","lists-roundup-users@bruce-guent...","etrade@untroubled.org","lists-ext3-users@bruce-guenter.d...","BRUCE@BRUCE-GUENTER.DY...","bruce-lists-linux-kernel@bruce-g...","BRUCE@UNTROUBLED.ORG","mailer-daemon@ezmlm.org","angusreid@untroubled.org"];
var deliveredValues = [505000,346000,313000,279000,266000,257000,229000,161000,122000,110000,78000,45000,33000,31600,30000,29500,28000,27000,25500,24800,20000,13000,12000,9000,8000,7000,7000,6500,6000,5500,5000,5000,4000,4000,3000,2500,2500,2000,2000,2000,1500,1500,1500,1000,1000,1000,1000,1000,1000,1000];

var ccLabels = ["cvs@bruce-guenter.dyndns.org","bruce@bruce-guenter.dyndns.org","lists-svn-users@bruce-guenter.dy...","cvsd@bruce-guenter.dyndns.org","cvsdd@bruce-guenter.dyndns.org","lists-bikini@bruce-guenter.dyndns.org","rait@bruce-guenter.dyndns.org","lists-linux-xfs@bruce-guenter.dyn...","lists-bikinid@bruce-guenter.dynd...","fs@bruce-guenter.dyndns.org","brucedd@bruce-guenter.dyndns.org","lists-svn-userse@bruce-guenter.d...","lists-nfs@bruce-guenter.dyndns.org","bruce-aa@bruce-guenter.dyndns.org","lists-linux-kernel@bruce-guenter...","catharinafrancky@bruce-guenter....","bruced@bruce-guenter.dyndns.org","lists-bikinia@bruce-guenter.dynd...","kaibmuv@bruce-guenter.dyndns.org","djue@bruce-guenter.dyndns.org","lists-djb-ezmlm@bruce-guenter.d...","lists-ezmlm@bruce-guenter.dyndn...","bruce-spam@bruce-guenter.dyndn...","bruceg@em.ca","ehbruce@bruce-guenter.dyndns.org","gfkukdlb@bruce-guenter.dyndns.org","wpwturw@bruce-guenter.dyndns.org","dtimq@bruce-guenter.dyndns.org","jncnbylqwdntw@bruce-guenter.dy...","lists-bikinidd@bruce-guenter.dyn...","kwaeecso@bruce-guenter.dynd...","raitd@bruce-guenter.dyndns.org","eal@bruce-guenter.dyndns.org","deanmpetri@bruce-guenter.dyndn...","rightbrain@em.ca","tmgmxpa@bruce-guenter.dyndns.org","raitdd@bruce-guenter.dyndns.org","jessa@bruce-guenter.dyndns.org","devel-foijylzpvbvcaz@bruce-guent...","tam@em.ca","uuyuhd@bruce-guenter.dyndns.org","lists-mp3encoder@bruce-guenter...","christopher@bruce-guenter.dyndn...","lindyduane@bruce-guenter.dyndn...","jups@bruce-guenter.dyndns.org","hartwellslick@bruce-guenter.dynd...","uce@bruce-guenter.dyndns.org","info@bruce-guenter.dyndns.org","minghuineng@bruce-guenter.dynd...","quentinrori@bruce-guenter.dyndn..."];
var ccValues = [7000,6536,5380,5004,4885,4715,4680,4390,4390,4375,3353,3319,3098,3080,3012,2877,2604,2502,2451,2434,2383,1991,1940,1787,1668,1600,1566,1532,1396,1328,1294,1260,1157,1123,1106,1089,1055,1038,1004,987,970,953,936,919,902,902,885,834,817,800];

var bccLabels = ["lists-bikini@bruce-guenter.dyndns.org","lists-svn-users@bruce-guenter.dy...","rait@bruce-guenter.dyndns.org","lists-linux-xfs@bruce-guenter.dyn...","bruce@bruce-guenter.dyndns.org","lists-svn-userse@bruce-guenter.d...","lists-bikinia@bruce-guenter.dynd...","info@bruce-guenter.dyndns.org","cvs@bruce-guenter.dyndns.org","fs@bruce-guenter.dyndns.org","bkewqr@bruce-guenter.dyndns.org","ftnrsabpebsje@bruce-guenter.dyn...","lists-bikinid@bruce-guenter.dynd...","lists-bikinidd@bruce-guenter.dyn...","amtlzl@bruce-guenter.dyndns.org","nudieave@bruce-guenter.dyndns.org","bait@em.ca","bbnlhxnvyau@bruce-guenter.dyndns.org","bruceg@em.ca","lists-linux-kernel@bruce-guenter...","kwaeececso@bruce-guenter.dynd...","robbyisabeau@bruce-guenter.dyn...","eiykkvmr@bruce-guenter.dyndns.org","lists-djb-ezmlm@bruce-guenter.d...","byrobzauzw@bruce-guenter.dyndn...","lindyduane@bruce-guenter.dyndn...","agsaeriel@bruce-guenter.dyndns.org","lists-nfs@bruce-guenter.dyndns.org","petgord34truew@bruce-guenter.d...","parekhdinh@bruce-guenter.dyndn...","evupn@bruce-guenter.dyndns.org","bpga@bruce-guenter.dyndns.org","innchymphebe@bruce-guenter.dy...","yungchunggiulio@bruce-guenter.d...","ramzisileas@bruce-guenter.dyndn...","joubertjoana@bruce-guenter.dynd...","cvsdd@bruce-guenter.dyndns.org","mhs@bruce-guenter.dyndns.org","catharinafrancky@bruce-guenter...","hironagachunglin@bruce-guenter...","raits@bruce-guenter.dyndns.org","uuyuhd@bruce-guenter.dyndns.org","stroeva@bruce-guenter.dyndns.org","atohsook@bruce-guenter.dyndns.org","3f25833fjacbh8bc@bruce-guenter...","djue@bruce-guenter.dyndns.org","orastephen@bruce-guenter.dyndn...","bait@untroubled.org","uce@bruce-guenter.dyndns.org","quentinrori@bruce-guenter.dyndn..."];
var bccValues = [5438,4175,4162,3983,3753,3702,3243,3102,2949,2898,2247,2004,1991,1966,1915,1864,1838,1787,1749,1711,1698,1672,1660,1660,1660,1647,1634,1634,1583,1557,1545,1545,1519,1506,1494,1494,1443,1430,1430,1404,1404,1391,1391,1366,1353,1340,1328,1277,1200,1174];

var toLabels = ["bruce@bruce-guenter.dyndns.org","lists-linux-xfs@bruce-guenter.dyn...","lists-djb-ezmlm@bruce-guenter.d...","lists-bikini@bruce-guenter.dyndns.org","lists-reiserfs-list@bruce-guenter...","lists-linux-kernel@bruce-guenter...","cvs@bruce-guenter.dyndns.org","rait@bruce-guenter.dyndns.org","bruceg@em.ca","bruce@untroubled.org","lists-ezmlm@bruce-guenter.dyndn...","fs@bruce-guenter.dyndns.org","webmaster@ezmlm.org","lists-bikinia@bruce-guenter.dynd...","lists-bikinid@bruce-guenter.dynd...","lists-bikinidd@bruce-guenter.dyn...","lists-nfs@bruce-guenter.dyndns.org","lists-svn-users@bruce-guenter.dy...","bait@em.ca","lists-svn-userse@bruce-guenter.d...","lists-mp3encoder@bruce-guenter...","bgware-owner@lists.untroubled.org","lists-doxygen-users@bruce-guent...","bait@untroubled.org","undisclosed-recipients:;","cvsd@bruce-guenter.dyndns.org","lists-linux-kernel@bruce-guenter...","lists-bikini@bruce-guenter.dyndn...","lists-reiserfs-list@bruce-guenter...","cvsdd@bruce-guenter.dyndns.org","lists-linux-xfs@bruce-guenter.dyn...","lists-xchat-script@bruce-guenter...","bruce@bruce-guenter.dyndns.bru...","lists-djb-ezmlm@bruce-guenter.d...","gfkukdlb@bruce-guenter.dyndns.org","djue@bruce-guenter.dyndns.org","mailer-daemon@bruce-guenter.dy...","bruced@bruce-guenter.dyndns.org","deanmpetri@bruce-guenter.dyndn...","inquiries@untroubled.org","free@spambait.homeip.net","lindyduane@bruce-guenter.dyndn...","bruceg@vmailmgr.org","jncnbylqwdntw@bruce-guenter.dy...","bgware-faq@lists.untroubled.org","bruceg@untroubled.org","bruceg@ezmlm.org","billing@ezmlm.org","dtimq@bruce-guenter.dyndns.org","jups@bruce-guenter.dyndns.org"];
var toValues = [519600,361000,304000,268000,267000,250000,235000,126000,116000,98000,82000,74000,33000,29000,27000,27000,25500,25500,22000,19000,16600,16600,15000,15000,14000,14000,13000,13000,11500,11500,10000,10000,10000,9000,9000,9000,7700,7700,7700,7700,6400,6400,6400,6400,5000,5000,5000,5000,5000,5000];

var replyLabels = ["mrty@get-c.com","mrty@get-celeb.com","mrty@vip-million.com","info@pgmail.com","mrty@million-partner.com","mrty@m-celeb.info","bruce@bruce-guenter.dyndns.org","info@now-change.mobi","lists-bikinid@bruce-guenter.dynd...","lists-svn-users@bruce-guenter.dy...","bgware-owner@lists.untroubled.org","cvs@bruce-guenter.dyndns.org","fs@bruce-guenter.dyndns.org","lists-bikinidd@bruce-guenter.dyn...","lists-svn-userse@bruce-guenter.d...","lists-bikinia@bruce-guenter.dynd...","lists-bikini@bruce-guenter.dyndns.org","rait@bruce-guenter.dyndns.org","lists-nfs@bruce-guenter.dyndns.org","lists-linux-xfs@bruce-guenter.dy...","info@paine-geogeek.com","lists-djb-ezmlm@bruce-guenter.d...","lists-mp3encoder@bruce-guenter...","info@happy-tomorrow.asia","lists-linux-kernel@bruce-guenter...","lists-doxygen-users@bruce-guent...","lists-ezmlm@bruce-guenter.dyndn...","mailer-daemon@bruce-guenter.dy...","info@tokuto.ku2014.asia","noreply@postmaster.twitter.com","info@smile-and-smile.mobi","hpxpeixun@yeah.net","info@information.mail2014.mobi","info@lucky-dogs0.asia","promos@megamind.com.ar","info@east-love.club","info@bmbs-world.mobi","info@bsc-sys777.asia","info@cat-love.asia","info@next-system.asia","info@celebrich.jp","lists-xchat-script@bruce-guent...","GoldMode@em.ca","bruce@untroubled.org","info@newinnovation.asia","info@next-mbga.mobi","info@happy-year2014.mobi","bruceg@vmailmgr.org","mrty@matchingbest.com","GoldModel3@yahoo.com"];
var replyValues = [8660,6383,5426,1277,1213,894,574,489,447,426,426,426,426,426,404,404,404,404,404,404,404,404,404,404,383,383,340,340,319,319,298,298,277,277,277,277,277,255,255,255,234,234,234,213,213,213,213,213,213,213];

var fromLabels = ["mail@garden.md","info@donfin.in","7.com@nanacom.tv","info@peach.6060.jp","info@mixi1mega.biz","info@ageha.cc","info@ts5558.com","info@momoiro.cc","top@koikoikoii.com","mail@satbohsma.com","mail@wakuwaku-happy.net","contact@get-c.com","info@greemmix.info","mail@li-brooz.jp","mail@ffairysns.com","lists-bikini@bruce-guenter.dyndns.org","mail@rdonfin.jp","info@netstar-inc.co.uk","info@hl-nvjwraj.jp","info@pazwwnvul.mobi","info@lfflfmbga.com","contact@get-celeb.com","bruce@bruce-guenter.dyndns.org","mail@bliveline9.com","info@sweet-gwc","info@cancan.bz","letter@oc-herry.jp","Green+@g706-plus.com","info@li-brooz.jp","info@pylinscgu.org","cvs@bruce-guenter.dyndns.org","message@vip-million-partner.com","info@upwdwesta.mobi","info@love-paradice.jp","info@escote.lo-ve.jp","lists-nfs@bruce-guenter.dyndns.org","mail@for-dear-2013.mobi","mail@pooxasmoa.com","lists-linux-kernel@bruce-guenter...","info@donfin.jp","lists-mp3encoder@bruce-guenter...","info@y-k-n.com","info@eclair-access.info","lists-linux-xfs@bruce-guenter.dyn...","info@universe-am.jp","info@2012gree.com","mail@wakuwaku06.info","info@zouxofmgt.mobi","mail@elims1.com","lists-bikinia@bruce-guenter.dynd..."];
var fromValues = [50000,43600,19300,18500,14700,14300,13300,11000,10300,9700,9100,8700,8400,8200,7800,7500,7100,6800,6500,6500,6400,6400,6300,6100,6000,5900,5700,5700,5700,5700,5600,5600,5600,5500,5500,5500,5400,5400,5400,5200,5100,5100,5000,4900,4900,4900,4700,4600,4500,4100];

var subjectLabels = ["BUY NOW VIAGRA CIALIS !!!","No Subject","=?Shift_JIS?B?gaaKrpFTlnOXv4G...","Pharmacy Store : Viagra + Cialis !","Canadian Pharmacy : Viagra + CIALIS !!","SALE DISCOUNT. BUY NOW VIA...","Super DISCOUNT. BUY NOW VIAG...","=?Shift_JIS?B?NTCWnII+gsyOY4...","Re:","hello","=?ISO-2022-JP?B?GyRCIVpKcz...","=?ISO-2022-JP?B?GyRCIVo4PT...","=?ISO-2022-JP?B?GyRCIVo4PTZ...","1 Buy now Viagra Cialis !!","=?shift_jis?B?gXIGUkVFgXqWs...","=?Shift_jis?B?gXmBmZb2l1KU/I5...","DISCOUNT 30%. BUY NOW VIA...","Dr.Maxman - Max Penis Enlarger Pills!","Fw:","DISCOUNT 30%. BUY NOW VIA...","hi","Re:","Pharmacy DISCOUNT. BUY NOW V...","=?Shift_JIS?B?MzCWnll+gsyOY4...","=?koi8-r?B?6drCwdfJ1NPRIM/...","( DISCOUNT 20% ) BUY NOW VIAG...","=?koi8-r?B?4tLP08nU2CDL1dU...","Max-Gentleman Enlargement*Pills","=?ISO-2022-JP?B?GyRCIVpFUE...","(no subject)","No description","=?ISO-2022-JP?B?GyRCIX5F...","=?utf-8?q?=F0=9F=92=B0?= TOP SAL...","=?ISO-2022-JP?B?GyRCRXZBK...","=?ISO-2022-JP?B?GyRCIVQlW...","BUY NOW VIGRA CIALIS !!! Fast D...","Online Pharmacy - VIAGRA + CIALIS !","=?ISO-2022-JP?B?GyRCIU49S...","Message subject","=?ISO-2022-JP?B?GyRCIVobKEJ...","BEST DISCOUNT. BUY NOW VIAGR...","=?x-sjis?B?gZ9saWJyYYGfg3y...","Fwd:","=?ISO-2022-JP?B?GyRCIVg4R...","=?ISO-2022-JP?B?WyA3LmNvbS...","=?koi8-r?B?8cfPxMEg58/E1skh...","Luxury Replicas : Watches, Jewelr...","Buy now Viagra Cialis ! Viagra is a ne...","=?ISO-2022-JP?B?GyRCIlglb...","=?ISO-2022-JP?B?GyRCJWolV..."];
var subjectValues = [27100,24800,12700,9600,4900,4100,2600,2400,2200,2200,2100,2100,2000,2000,2000,2000,2000,1900,1900,1850,1800,1800,1700,1700,1650,1650,1600,1600,1600,1500,1500,1500,1450,1450,1450,1400,1400,1400,1350,1350,1300,1300,1300,1250,1250,1200,1200,1150,1150,1100];

var half = { first: 60.500, last: 577.500, tickOff: -3.400, axisEnd: 577, clipX: 578.500, titleX: 318, top: 10 };
var wide = { first: 67.400, last: 1241.600, tickOff: -2.500, axisEnd: 1247, clipX: 1250, titleX: 653, top: 10 };
function cfg(base, extra) {
    var o = {};
    for (var k in base) o[k] = base[k];
    for (var j in extra) o[j] = extra[j];
    return o;
}
var tall = { zero: 277, labelsEnd: 455 };
var low = { zero: 167, labelsEnd: 348 };

drawChart("ips", cfg(wide, { bars: true, first: 58.500, last: 1249.500, tickOff: 0, zero: 364, labelsEnd: 455, axisEnd: 1258, max: 350000, ticks: [0,50000,100000,150000,200000,250000,300000,350000], labels: ipLabels, values: ipValues, title: "Top 100 X-Originating-IP.raw", titleX: 644 }));
drawPie();
drawChart("delivered", cfg(half, cfg(tall, { max: 600000, ticks: [0,100000,200000,300000,400000,500000,600000], labels: deliveredLabels, values: deliveredValues, title: "Top 50 Delivered-to.raw" })));
drawChart("cc", cfg(half, cfg(low, { max: 8000, ticks: [0,2000,4000,6000,8000], labels: ccLabels, values: ccValues, title: "Top 50 CC.raw" })));
drawChart("bcc", cfg(half, cfg(low, { max: 6000, ticks: [0,2000,4000,6000], labels: bccLabels, values: bccValues, title: "Top 50 BCC.raw" })));
drawChart("to", cfg(half, cfg(low, { max: 600000, ticks: [0,200000,400000,600000], labels: toLabels, values: toValues, title: "Top 50 To.raw" })));
drawChart("replyto", cfg(half, cfg(low, { max: 10000, ticks: [0,2000,4000,6000,8000,10000], labels: replyLabels, values: replyValues, title: "Top 50 Reply-To.raw" })));
drawChart("from", cfg(wide, cfg(low, { max: 60000, ticks: [0,20000,40000,60000], labels: fromLabels, values: fromValues, title: "Top 50 From.raw" })));
drawChart("subject", cfg(wide, cfg(low, { max: 30000, ticks: [0,10000,20000,30000], labels: subjectLabels, values: subjectValues, title: "Top 50 Subject.raw" })));
drawMap();
```
